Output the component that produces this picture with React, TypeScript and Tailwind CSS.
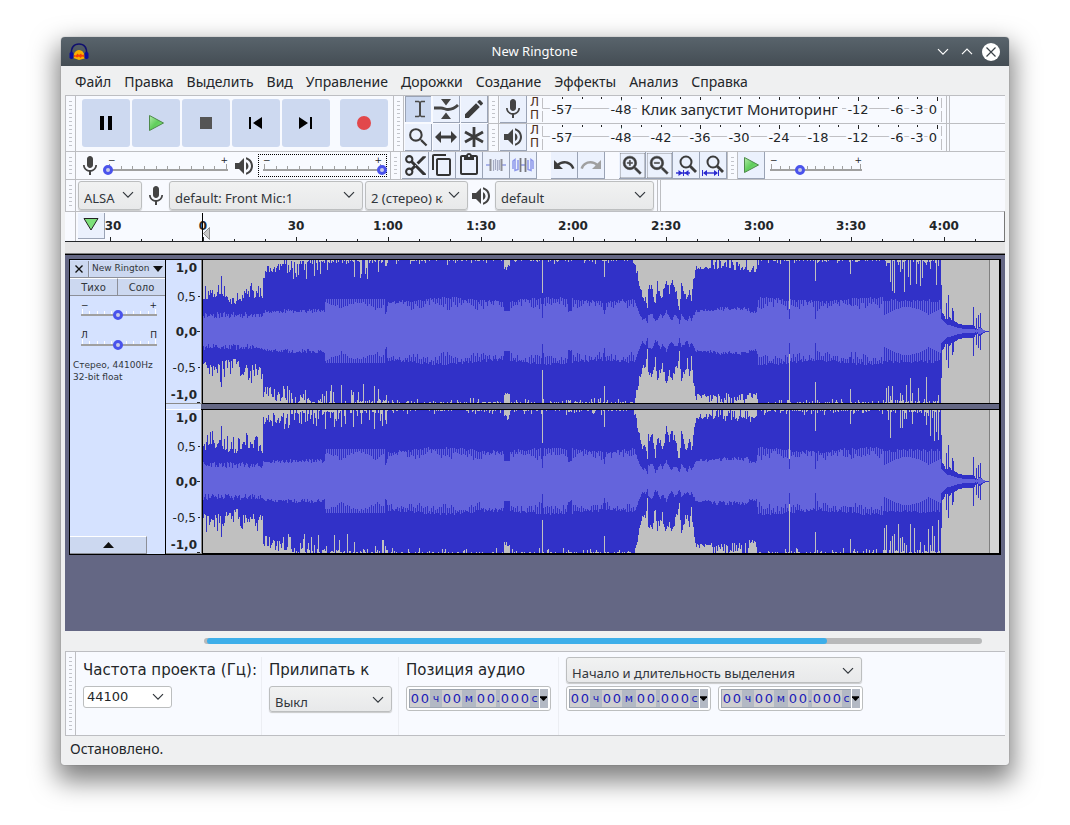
import { useMemo } from "react";
import type { ReactNode } from "react";
import {
  MdContentCopy,
  MdContentCut,
  MdContentPaste,
  MdEdit,
  MdMic,
  MdRedo,
  MdSearch,
  MdUndo,
  MdVolumeUp,
  MdZoomIn,
  MdZoomOut,
} from "react-icons/md";

const MENU = ["Файл", "Правка", "Выделить", "Вид", "Управление", "Дорожки", "Создание", "Эффекты", "Анализ", "Справка"];

const INK = "#31363b";

/* ---------- small building blocks ---------- */

function Grip() {
  return (
    <div className="flex w-[11px] shrink-0 self-stretch border-x border-[#bdbec2] px-[3px] py-[5px]">
      <div className="w-full bg-[repeating-linear-gradient(to_bottom,#c2c4ca_0_1px,transparent_1px_4px)]" />
    </div>
  );
}

function Chevron({ className = "" }: { className?: string }) {
  return (
    <svg className={className} width="12" height="8" viewBox="0 0 12 8" fill="none" stroke={INK} strokeWidth="1.2">
      <path d="M1 1.2 6 6.2 11 1.2" />
    </svg>
  );
}

function Combo({ label, value, className = "" }: { label: string; value: string; className?: string }) {
  return (
    <div className={`relative shrink-0 ${className}`}>
      <select
        aria-label={label}
        defaultValue={value}
        className="h-full w-full appearance-none overflow-hidden rounded-[3px] border border-[#bcbebf] bg-linear-to-b from-[#f1f2f2] to-[#e8e9ea] pt-[6px] pr-6 pl-[5px] text-[13px] text-[#31363b] shadow-[0_1px_1px_#c8c9ca]"
      >
        <option>{value}</option>
      </select>
      <Chevron className="pointer-events-none absolute top-[10px] right-2" />
    </div>
  );
}

function ToolButton({ label, active, children }: { label: string; active?: boolean; children: ReactNode }) {
  return (
    <button
      aria-label={label}
      className={`flex h-[27px] w-[27px] shrink-0 items-center justify-center border-r border-b ${
        active ? "border-[#f8faff] bg-[#cbd8f0] shadow-[inset_1px_1px_0_#9aa3b5]" : "border-[#9aa3b5] bg-[#ebf1fd]"
      }`}
    >
      {children}
    </button>
  );
}

function Slider({
  label,
  value,
  ends = ["−", "+"],
  light,
  className = "",
}: {
  label: string;
  value: number;
  ends?: string[];
  light?: boolean;
  className?: string;
}) {
  return (
    <div className={`flex flex-col ${className}`}>
      <div className="flex h-2 items-center justify-between px-[5px] font-['DejaVu_Sans',sans-serif] text-[9px] leading-none text-[#232629]">
        <span>{ends[0]}</span>
        <span>{ends[1]}</span>
      </div>
      <div className="relative h-[11px]">
        <div className="mx-[5px] flex h-[7px] items-end justify-between border-b-2 border-[#a0a0a0] px-px">
          {Array.from({ length: 11 }, (_, i) => (
            <i
              key={i}
              className={`w-px ${i % 10 === 0 ? "h-[5px]" : "h-[3px]"} ${light ? "bg-white" : "bg-[#a0a0a0]"}`}
            />
          ))}
        </div>
        <input
          type="range"
          aria-label={label}
          min={0}
          max={100}
          defaultValue={value}
          className="absolute inset-0 h-[11px] w-full appearance-none bg-transparent [&::-webkit-slider-thumb]:h-[10px] [&::-webkit-slider-thumb]:w-[10px] [&::-webkit-slider-thumb]:appearance-none [&::-webkit-slider-thumb]:rounded-full [&::-webkit-slider-thumb]:border-[3px] [&::-webkit-slider-thumb]:border-[#4a53ec] [&::-webkit-slider-thumb]:bg-[#c9cbe6]"
        />
      </div>
    </div>
  );
}

/* ---------- icons ---------- */

function AppIcon() {
  return (
    <svg width="20" height="18" viewBox="0 0 20 18">
      <path d="M2.500 11C1.800 4.500 5 1 10 1s8.200 3.500 7.500 10" fill="none" stroke="#10106e" strokeWidth="1.500" />
      <path d="M4.500 15C4 11 6.500 7 10 7s6 3.500 5.500 8.500L10 17Z" fill="#f9b000" />
      <path d="M5 12l2 .5 1.500-2 1.500 1.500 2-1.500 1 1.500 2-.5v2.500l-2-.5-1.500 1.500-1.500-1.500-2 1-1.500-1-1.500.5Z" fill="#f5400a" />
      <rect x="0.500" y="9" width="4" height="7" rx="1.800" fill="#0d0d9c" />
      <rect x="15.500" y="9" width="4" height="7" rx="1.800" fill="#0d0d9c" />
    </svg>
  );
}

function PlayIcon() {
  return (
    <svg width="17" height="18" viewBox="0 0 17 18">
      <defs>
        <linearGradient id="play" x1="0" y1="0" x2="1" y2="1">
          <stop offset="0" stopColor="#b4ecab" />
          <stop offset=".5" stopColor="#5fce5a" />
          <stop offset="1" stopColor="#8ce084" />
        </linearGradient>
      </defs>
      <path d="M1.500 1.500 15.500 9 1.500 16.500Z" fill="url(#play)" stroke="#4e8a4b" />
    </svg>
  );
}

function SelectIcon() {
  return (
    <svg className="ml-1" width="12" height="18" viewBox="0 0 12 18" fill="none" stroke="#4a4a4a" strokeWidth="2">
      <path d="M1 1.500h3.500L6 2.500l1.500-1H11M1 16.500h3.500L6 15.500l1.500 1H11" strokeWidth="1.500" />
      <path d="M6 2v14" />
    </svg>
  );
}

function EnvelopeIcon() {
  return (
    <svg width="26" height="20" viewBox="0 0 26 20" fill="#444">
      <path d="M8 0h10l-5 6.500ZM8 20h10l-5-6.500Z" />
      <path d="M1 9h7c3 0 4 1.500 7 1.500S22 9 25 6" fill="none" stroke="#444" strokeWidth="2.800" />
    </svg>
  );
}

function TimeShiftIcon() {
  return (
    <svg width="22" height="14" viewBox="0 0 22 14" fill="#3c3c3c">
      <path d="M0 7 6 1v4.500h10V1l6 6-6 6V8.500H6V13Z" />
    </svg>
  );
}

function MultiIcon() {
  return (
    <svg width="20" height="20" viewBox="0 0 20 20" fill="none" stroke="#3c3c3c" strokeWidth="2.800">
      <path d="M10 0v20M1 5l18 10M19 5 1 15" />
    </svg>
  );
}

function TrimIcon() {
  return (
    <svg width="20" height="18" viewBox="0 0 20 18" fill="none">
      <path d="M0 9h5M15 9h5" stroke="#a9b3ea" strokeWidth="2" />
      <path d="M4.500 3v12M15.500 3v12" stroke="#8e8f96" strokeWidth="2" />
      <path d="M7.500 15V4M9.500 14V3M11.500 15V4M13.300 14V4" stroke="#a7acc4" strokeWidth="1.200" />
    </svg>
  );
}

function SilenceIcon() {
  return (
    <svg width="22" height="18" viewBox="0 0 22 18" fill="none">
      <path d="M1 13V5l2-1.500v11l3-1V4M21 13V5l-2-1.500v11l-3-1V4" stroke="#8d97ea" strokeWidth="1.500" />
      <path d="M8.500 9h5" stroke="#8d97ea" strokeWidth="1.500" />
      <path d="M8.500 2v14M13.500 2v14" stroke="#77787e" strokeWidth="1.800" />
    </svg>
  );
}

// Material's magnifier with a heavier plus or minus over its lens
function ZoomIcon({ plus }: { plus?: boolean }) {
  const Icon = plus ? MdZoomIn : MdZoomOut;
  return (
    <span className="relative">
      <Icon size={25} color="#3c3c3c" stroke="#3c3c3c" strokeWidth="0.500" />
    </span>
  );
}

function ZoomFitIcon({ wide }: { wide?: boolean }) {
  return (
    <svg width="24" height="24" viewBox="0 0 24 24" fill="none">
      <circle cx="12" cy="9" r="5.500" stroke="#3c3c3c" strokeWidth="2" />
      <path d="m16 13 6 6" stroke="#3c3c3c" strokeWidth="2.800" />
      <path d={wide ? "M3 20h13" : "M2 20h14"} stroke="#2b2bd0" strokeWidth="1.400" />
      {wide ? (
        <path d="M1 17h1v6H1ZM17 17h1v6h-1ZM2 20l4-3v6ZM17 20l-4-3v6Z" fill="#2b2bd0" />
      ) : (
        <path d="M8.500 20 4.500 17v6ZM10.500 20l4-3v6ZM9 17h1v6H9Z" fill="#2b2bd0" />
      )}
    </svg>
  );
}

/* ---------- meters ---------- */

const METER_LABELS: [string, number][] = [
  ["-57", 20], ["-48", 79], ["-42", 119], ["-36", 158], ["-30", 197], ["-24", 237],
  ["-18", 276], ["-12", 316], ["-6", 355], ["-3", 375], ["0", 391],
];

function Meter({ label, icon, hint }: { label: string; icon: ReactNode; hint?: string }) {
  // the hint covers the middle of the scale
  const labels = hint ? METER_LABELS.filter(([, x]) => x < 100 || x > 300) : METER_LABELS;
  return (
    <div className="flex h-7 font-['DejaVu_Sans',sans-serif]">
      <Grip />
      <div className="ml-px flex">
        <ToolButton label={label}>{icon}</ToolButton>
      </div>
      <div className="flex w-[15px] flex-col items-center text-[12px] leading-[13px] text-[#4d2c1a]">
        <span>Л</span>
        <span>П</span>
      </div>
      <div className="relative w-[400px]">
        <svg width="400" height="27" className="block">
          <path d="M0.500 2V12.500H396M0.500 26V15M399.500 2v10M399.500 15v11" fill="none" stroke="#c0c0c4" />
          {Array.from({ length: 20 }, (_, i) => (
            <rect key={i} x={20 + Math.round(i * 19.74)} y="1" width="1" height={i % 4 === 3 ? 4 : 2} fill="#222" />
          ))}
          {labels.map(([text, x]) => (
            <text
              key={text}
              x={x}
              y="18"
              textAnchor="middle"
              className="fill-[#232629] stroke-[#f8faff] stroke-4 text-[13px] [paint-order:stroke]"
            >
              {text}
            </text>
          ))}
        </svg>
        {hint && (
          <span className="absolute top-[4px] left-[95px] w-[205px] bg-[#f8faff] text-center font-['Noto_Sans',sans-serif] text-[15px] leading-[19px] whitespace-nowrap text-[#232629]">
            {hint}
          </span>
        )}
      </div>
      <div className="ml-1 w-1 border-x border-[#bdbec2]" />
    </div>
  );
}

/* ---------- timeline and waveforms ---------- */

// pixels in thirty seconds at the current zoom
const HALF_MINUTE = 92.6;

function Timeline() {
  const origin = 97;
  return (
    <svg className="block h-[30px] w-full">
      {Array.from({ length: 30 }, (_, i) => {
        const n = i - 3;
        const x = Math.round(origin + 1 + (n * HALF_MINUTE) / 3);
        const major = n % 3 === 0;
        return <rect key={i} x={x} y={major ? 25 : 27} width="1" height={major ? 4 : 2} fill="#232629" />;
      })}
      {["30", "0", "30", "1:00", "1:30", "2:00", "2:30", "3:00", "3:30", "4:00"].map((t, i) => (
        <text
          key={i}
          x={i === 0 ? 8 : Math.round(origin + 1 + (i - 1) * HALF_MINUTE)}
          y="18"
          textAnchor="middle"
          className="fill-[#232629] font-['DejaVu_Sans',sans-serif] text-[12px] font-bold"
        >
          {t}
        </text>
      ))}
      <path d="M104.500 15.500v12l-6-6Z" fill="#c8c8c8" stroke="#8a8a8a" />
      <rect x={origin} y="1" width="1" height="29" fill="#000" />
    </svg>
  );
}

function rng(seed: number) {
  let s = seed;
  return () => {
    s = (s * 1664525 + 1013904223) % 4294967296;
    return s / 4294967296;
  };
}

const HALF = 71;

// [column, peak, rms] where the song goes quiet and where it fades out
const QUIET: number[][] = [
  [431, 70, 30], [434, 56, 22], [437, 43, 14], [439, 34, 10], [442, 34, 12], [444, 20, 7], [445, 43, 15],
  [449, 44, 16], [452, 27, 8], [454, 46, 10], [457, 38, 17], [459, 34, 12], [463, 51, 19], [466, 38, 12],
  [468, 50, 10], [471, 42, 14], [474, 33, 13], [476, 20, 7], [478, 47, 15], [480, 42, 13], [484, 30, 9],
  [486, 44, 14], [488, 28, 10], [490, 48, 14], [492, 60, 18],
];
const TAIL: number[][] = [
  [738, 46, 12], [739, 18, 11], [741, 15, 9], [742, 12, 8], [743, 28, 7], [744, 12, 6], [745, 36, 6], [746, 14, 6],
  [748, 11, 5], [749, 23, 5], [750, 20, 5], [751, 10, 4], [755, 7, 3], [762, 6, 2], [769, 6, 2], [770, 24, 2],
  [771, 5, 2], [772, 3, 1], [773, 13, 2], [774, 2, 1], [775, 16, 3], [776, 4, 3], [777, 18, 3], [778, 3, 2],
  [780, 1, 1], [782, 0, 0], [787, 0, 0],
];
// single columns cut short by a beat
const CUTS: Record<number, [number, number]> = {
  339: [38, 13], 401: [54, 17], 586: [22, 12], 612: [50, 12], 614: [68, 20], 647: [57, 26],
};

function lerp(points: number[][], x: number, k: number) {
  for (let i = 1; i < points.length; i++) {
    if (x <= points[i][0]) {
      const a = points[i - 1];
      const b = points[i];
      return a[k] + ((b[k] - a[k]) * (x - a[0])) / (b[0] - a[0]);
    }
  }
  return points[points.length - 1][k];
}

function column(x: number, rand: () => number): [number, number] {
  const r = rand();
  const r2 = rand();
  const trough = 26 + 2 * Math.sin(x / 5) + 7 * (r2 - 0.5);
  const loudRms = x % 2 ? 31 + 2 * Math.sin(x / 17) + 3 * (r2 - 0.5) : trough;
  const loudPeak = r < 0.12 ? 66 + 4 * r2 : 70 + 2 * r2;
  if (x < 60) return [x === 18 ? 55 : 29 + 3 * Math.sin(x / 6) + 18 * r * r2 + 6 * r, 13 + 6 * r2];
  if (x < 80) return [52 + 13 * r + (x - 60) / 3, 18 + 3 * r2];
  if (x < 122) return [r < 0.3 ? 52 + 14 * r2 : 66 + 6 * r2, 18 + 4 * r2];
  if (x < 182) return [r < 0.25 ? 52 + 16 * r2 : 68 + 5 * r2, x % 2 ? 32 : 20 + 7 * Math.abs(Math.sin(x / 11)) + 3 * r2];
  if (x < 184) return [56 + 12 * r, 16 + 3 * r2];
  if (x >= 301 && x < 307) return [60 + 6 * r, 20];
  if (x >= 365 && x < 369) return [68 + 3 * r, 19 + 2 * r2];
  if (x < 431) return [CUTS[x]?.[0] ?? loudPeak, CUTS[x]?.[1] ?? loudRms];
  if (x < 493) return [lerp(QUIET, x, 1) + 9 * (r - 0.5), lerp(QUIET, x, 2) + 2 * r2];
  if (x < 508) return [62 + 8 * r * r2, 19 + 3 * r2];
  if (x < 546) return [60 + 13 * r, 20 + 4 * r2];
  if (x < 554) return [58 + 8 * r, 18 + 2 * r2];
  if (CUTS[x]) return CUTS[x];
  if (x < 680) return [loudPeak, loudRms];
  if (x < 738) return [x % 2 && r < 0.6 ? 38 + 34 * r2 : 68 + 4 * r, x % 2 ? 16 + 8 * Math.abs(Math.cos(x / 14)) : 29 + 3 * r2];
  return [lerp(TAIL, x, 1), lerp(TAIL, x, 2)];
}

function bars(seed: number) {
  const up = rng(seed);
  const down = rng(seed + 77);
  let peak = "";
  let rms = "";
  for (let x = 0; x < 786; x++) {
    const [p1, r1] = column(x, up);
    const [p2, r2] = column(x, down);
    const top = Math.min(HALF, Math.round(p1));
    const bottom = Math.min(HALF, Math.round(p2));
    peak += `M${x} ${HALF - top}h1v${top + bottom + 1}h-1z`;
    const a = Math.round(r1);
    const b = Math.round(r2);
    rms += `M${x} ${HALF - a}h1v${a + b}h-1z`;
  }
  return { peak, rms };
}

function Waveform({ seed }: { seed: number }) {
  const { peak, rms } = useMemo(() => bars(seed), [seed]);
  return (
    <svg className="block h-[143px] w-full bg-[#d4d4d4]" shapeRendering="crispEdges">
      <rect width="786" height="143" fill="#c0c0c0" />
      <path d={peak} fill="#3131c8" />
      <path d={rms} fill="#6464dc" />
      <rect x="786" width="1" height="143" fill="#808080" />
    </svg>
  );
}

function AmplitudeScale() {
  const rows: [string, number, boolean][] = [
    ["1,0", 12, true], ["0,5", 41, false], ["0,0", 76, true], ["-0,5", 112, false], ["-1,0", 139, true],
  ];
  return (
    <svg className="block h-[143px] w-[35px] bg-[#d5e2ff] font-['DejaVu_Sans',sans-serif]">
      {rows.map(([t, y, bold]) => (
        <text
          key={t}
          x={bold ? 31 : 30}
          y={y}
          textAnchor="end"
          className={bold ? "fill-[#232629] text-[12px] font-bold" : "fill-[#232629] text-[12px]"}
        >
          {t}
        </text>
      ))}
      <path d="M32 36.500h2M31 71.500h3M32 107.500h2M31 142.500h3" stroke="#232629" />
    </svg>
  );
}

function Channel({ seed }: { seed: number }) {
  return (
    <div className="flex">
      <div className="border-r border-b border-[#8a8a8a]">
        <AmplitudeScale />
      </div>
      <div className="min-w-0 flex-1 border-b border-l border-black">
        <Waveform seed={seed} />
      </div>
    </div>
  );
}

function Track() {
  return (
    <section className="flex border border-r-2 border-black bg-[#646784]">
      <div className="flex w-24 shrink-0 flex-col border-r border-black bg-[#d5e2ff] font-['DejaVu_Sans',sans-serif] text-[10px] text-[#31363b]">
        <div className="flex h-[18px] gap-px border-b border-[#8c8f98] pt-px">
          <button aria-label="Закрыть дорожку" className="flex w-[19px] shrink-0 items-center justify-center border-r border-[#8c8f98] bg-[#ccd8f0]">
            <svg width="8" height="8" viewBox="0 0 8 8" stroke="#111" strokeWidth="1.400">
              <path d="M.5.500l7 7M7.500.500l-7 7" />
            </svg>
          </button>
          <button className="flex flex-1 items-center justify-between bg-[#ccd8f0] pr-[2px] pl-[2px] text-[9px] whitespace-nowrap">
            New Rington
            <svg className="shrink-0" width="10" height="6" viewBox="0 0 10 6">
              <path d="M0 0h10L5 6Z" fill="#111" />
            </svg>
          </button>
        </div>
        <div className="flex h-[18px] border-b border-[#8c8f98]">
          <button className="flex-1 border-t border-r border-t-white border-r-[#8c8f98] bg-[#ccd8f0]">Тихо</button>
          <button className="flex-1 border-t border-t-white bg-[#ccd8f0]">Соло</button>
        </div>
        <Slider label="Усиление" value={49} light className="mt-[5px] mr-[3px] ml-[6px]" />
        <Slider label="Панорама" value={49} ends={["Л", "П"]} light className="mt-[11px] mr-[3px] ml-[6px]" />
        <p className="mt-[9px] pl-[3px] text-[9px] leading-3 whitespace-nowrap">
          Стерео, 44100Hz
          <br />
          32-bit float
        </p>
        <button
          aria-label="Свернуть"
          className="mt-auto flex h-[18px] w-[77px] items-center justify-center border-t border-r border-b border-t-white border-r-[#8c8f98] border-b-[#8c8f98] bg-[#ccd8f0]"
        >
          <svg width="11" height="6" viewBox="0 0 11 6">
            <path d="M0 6h11L5.500 0Z" fill="#111" />
          </svg>
        </button>
      </div>
      <div className="flex min-w-0 flex-1 flex-col">
        <Channel seed={11} />
        <div className="flex h-[6px]">
          <div className="w-[35px] border-b border-white bg-[#d5e2ff]" />
          <div className="flex-1 border-b border-black" />
        </div>
        <Channel seed={52} />
      </div>
    </section>
  );
}

/* ---------- selection bar ---------- */

const TIME_PARTS: [number, string, string][] = [
  [2, "ч", "w-3"],
  [2, "м", "w-[14px]"],
  [2, ".", "w-1"],
  [3, "с", "w-[9px]"],
];

function TimeField({ label }: { label: string }) {
  return (
    <div
      role="group"
      aria-label={label}
      className="flex h-[25px] w-[145px] rounded-[3px] border border-[#bcbebf] bg-white p-[2px] font-['DejaVu_Sans',sans-serif] text-[13px] text-[#1c1cb8]"
    >
      <div className="flex h-[19px] w-[130px] border border-r-0 border-[#9ea6b0] bg-[#b3b9c4]">
        {TIME_PARTS.map(([count, unit, width], p) => (
          <div key={p} className="flex">
            {Array.from({ length: count }, (_, i) => (
              <input
                key={i}
                aria-label={`${label}: ${unit} ${i + 1}`}
                maxLength={1}
                defaultValue="0"
                className="h-[17px] w-[10px] bg-[#cfcfcf] text-center"
              />
            ))}
            <span className={`text-center text-[11px] leading-[17px] ${width}`}>{unit}</span>
          </div>
        ))}
      </div>
      <button aria-label="Формат времени" className="ml-px flex h-[19px] w-2 items-center bg-[#b3b9c4]">
        <svg width="7" height="5" viewBox="0 0 8 5">
          <path d="M0 0h8v1L4.500 5h-1L0 1Z" fill="#000" />
        </svg>
      </button>
    </div>
  );
}

const FIELD_LABEL = "block h-[29px] font-['DejaVu_Sans',sans-serif] text-[15px] leading-[27px] whitespace-nowrap";

const TRANSPORT_BUTTON = "flex h-12 w-12 items-center justify-center rounded-[3px] bg-[#cdd9f0]";

export default function App() {
  return (
    <div className="min-h-screen bg-white px-[61px] pt-[37px] pb-[60px] font-['Noto_Sans',sans-serif] text-[13px] text-[#232629]">
      <main className="flex flex-col rounded-t-[4px] rounded-b-[3px] bg-[#eff0f1] shadow-[0_12px_26px_4px_rgba(0,0,0,0.5),0_0_1px_#777]">
        <header className="grid h-[29px] grid-cols-3 items-center rounded-t-[4px] bg-linear-to-b from-[#59646c] to-[#444d54] pr-[9px] pl-2 text-[#fcfcfc]">
          <AppIcon />
          <h1 className="text-center">New Ringtone</h1>
          <div className="flex items-center justify-end gap-[9px]">
            <div className="flex gap-3">
              <button aria-label="Свернуть окно">
                <svg width="12" height="8" viewBox="0 0 12 8" fill="none" stroke="#fff" strokeWidth="1.200">
                  <path d="M1 1.200 6 6.200 11 1.200" />
                </svg>
              </button>
              <button aria-label="Развернуть окно">
                <svg width="12" height="8" viewBox="0 0 12 8" fill="none" stroke="#fff" strokeWidth="1.200">
                  <path d="M1 6.200 6 1.200 11 6.200" />
                </svg>
              </button>
            </div>
            <button aria-label="Закрыть окно" className="flex h-[18px] w-[18px] items-center justify-center rounded-full bg-white">
              <svg width="10" height="10" viewBox="0 0 10 10" stroke="#3a4248" strokeWidth="1.200">
                <path d="M.5.500l9 9M9.500.500l-9 9" />
              </svg>
            </button>
          </div>
        </header>

        <nav className="flex h-[29px] items-center gap-[13px] px-[14px] pt-px text-[14px]">
          {MENU.map((m) => (
            <button key={m}>{m}</button>
          ))}
        </nav>

        <div className="mx-1 bg-[#f8faff]">
          {/* transport, tools, meters */}
          <div className="flex h-14 border-t border-[#bdbec2]">
            <Grip />
            <div className="flex gap-[2px] py-[3px] pr-[5px] pl-[6px]">
              <button aria-label="Пауза" className={TRANSPORT_BUTTON}>
                <svg width="12" height="14" viewBox="0 0 12 14">
                  <path d="M0 0h4v14H0ZM8 0h4v14H8Z" />
                </svg>
              </button>
              <button aria-label="Воспроизвести" className={TRANSPORT_BUTTON}>
                <PlayIcon />
              </button>
              <button aria-label="Стоп" className={TRANSPORT_BUTTON}>
                <span className="h-3 w-3 bg-[#555]" />
              </button>
              <button aria-label="К началу" className={TRANSPORT_BUTTON}>
                <svg width="14" height="12" viewBox="0 0 14 12">
                  <path d="M0 0h2v12H0ZM13 0v12L4 6Z" />
                </svg>
              </button>
              <button aria-label="К концу" className={TRANSPORT_BUTTON}>
                <svg width="14" height="12" viewBox="0 0 14 12">
                  <path d="M11 0h2v12h-2ZM0 0v12l9-6Z" />
                </svg>
              </button>
              <button aria-label="Запись" className={`ml-2 ${TRANSPORT_BUTTON}`}>
                <span className="h-[14px] w-[14px] rounded-full bg-[#e2484b]" />
              </button>
            </div>
            <Grip />
            <div className="grid grid-cols-3 content-start gap-x-px gap-y-px pl-px">
              <ToolButton label="Выделение" active><SelectIcon /></ToolButton>
              <ToolButton label="Огибающая"><EnvelopeIcon /></ToolButton>
              <ToolButton label="Карандаш"><MdEdit size={24} color="#3c3c3c" /></ToolButton>
              <ToolButton label="Масштаб"><MdSearch size={25} color="#3c3c3c" /></ToolButton>
              <ToolButton label="Сдвиг"><TimeShiftIcon /></ToolButton>
              <ToolButton label="Мультиинструмент"><MultiIcon /></ToolButton>
            </div>
            <div className="min-w-0 flex-1">
              <div className="h-7 border-b border-[#bdbec2]">
                <Meter label="Уровень записи" icon={<MdMic size={24} color="#444" />} hint="Клик запустит Мониторинг" />
              </div>
              <Meter label="Уровень воспроизведения" icon={<MdVolumeUp size={24} color="#444" />} />
            </div>
          </div>

          {/* mixer, edit, zoom */}
          <div className="flex h-7 items-center border-t border-[#bdbec2]">
            <Grip />
            <MdMic className="ml-[2px] shrink-0" size={24} color="#444" />
            <Slider label="Громкость записи" value={0} className="ml-px w-[130px]" />
            <MdVolumeUp className="-ml-px shrink-0" size={24} color="#444" />
            <div className="ml-[2px] flex h-[23px] items-center border border-dotted border-black">
              <Slider label="Громкость воспроизведения" value={100} className="-mx-px w-[129px]" />
            </div>
            <div className="ml-[3px] flex self-stretch"><Grip /></div>
            <div className="ml-px flex self-start">
              <ToolButton label="Вырезать"><MdContentCut size={25} color="#333" /></ToolButton>
              <ToolButton label="Копировать"><MdContentCopy size={24} color="#333" /></ToolButton>
              <ToolButton label="Вставить"><MdContentPaste size={24} color="#333" /></ToolButton>
              <ToolButton label="Обрезать"><TrimIcon /></ToolButton>
              <ToolButton label="Тишина"><SilenceIcon /></ToolButton>
            </div>
            <div className="ml-[14px] flex self-start">
              <ToolButton label="Отменить"><MdUndo size={24} color="#3c3c3c" /></ToolButton>
              <ToolButton label="Повторить"><MdRedo size={24} color="#a0a0a0" /></ToolButton>
            </div>
            <div className="ml-[14px] flex self-start">
              <ToolButton label="Приблизить"><ZoomIcon plus /></ToolButton>
              <ToolButton label="Отдалить"><ZoomIcon /></ToolButton>
              <ToolButton label="Уместить выделение"><ZoomFitIcon /></ToolButton>
              <ToolButton label="Уместить проект"><ZoomFitIcon wide /></ToolButton>
            </div>
            <Grip />
            <div className="flex self-start">
              <ToolButton label="Воспроизвести на скорости"><PlayIcon /></ToolButton>
            </div>
            <Slider label="Скорость" value={33} className="w-[102px]" />
          </div>

          {/* devices */}
          <div className="flex h-8 border-t border-[#bdbec2]">
            <Grip />
            <div className="flex items-center py-px pl-[2px]">
              <Combo label="Интерфейс" value="ALSA" className="h-[29px] w-16" />
              <MdMic className="ml-[2px] shrink-0" size={24} color="#444" />
              <Combo label="Устройство записи" value="default: Front Mic:1" className="ml-px h-[29px] w-[194px]" />
              <Combo label="Каналы" value="2 (стерео) канала" className="ml-[2px] h-[29px] w-[103px]" />
              <MdVolumeUp className="ml-px shrink-0" size={24} color="#444" />
              <Combo label="Устройство воспроизведения" value="default" className="ml-[2px] h-[29px] w-[159px]" />
            </div>
            <div className="ml-[3px] w-1 border-x border-[#bdbec2]" />
          </div>

          {/* timeline */}
          <div className="flex h-[31px] border-t border-r border-b border-t-[#bdbec2] border-r-[#777] border-b-[#232629]">
            <div className="w-[11px] shrink-0 border-r border-[#bdbec2]" />
            <button
              aria-label="Закрепить указатель"
              className="mt-px ml-[2px] flex h-[26px] w-[27px] shrink-0 items-start justify-center border-r border-b border-[#9aa3b5] bg-[#ebf1fd] pt-[5px]"
            >
              <svg width="16" height="13" viewBox="0 0 16 13">
                <path d="M1 .5h14L8 12Z" fill="#7de07a" stroke="#222" />
              </svg>
            </button>
            <div className="min-w-0 flex-1">
              <Timeline />
            </div>
          </div>
        </div>

        <div className="mx-1 h-3 border-b border-[#808080] bg-[#e4e4e4]" />

        <div id="tracks" className="mx-1 min-h-[377px] border-t border-black bg-[#646784] pt-1 pr-1 pl-1">
          <Track />
        </div>

        <div className="mx-1 py-[7px] pr-[23px] pl-[139px]">
          <div role="scrollbar" aria-controls="tracks" aria-valuenow={0} className="h-[6px] rounded-full bg-[#b8b9ba] pl-[3px]">
            <div className="h-full w-4/5 rounded-full bg-[#3daee9]" />
          </div>
        </div>

        <div className="mx-1 flex h-[85px] border-y border-[#bdbec2] bg-[#f8faff]">
          <Grip />
          <div className="flex gap-[7px] pt-[5px] pl-[7px]">
            <div className="w-[179px] border-r border-[#eceef3]">
              <label htmlFor="rate" className={FIELD_LABEL}>Частота проекта (Гц):</label>
              <div className="flex h-[22px] w-[89px] items-center rounded-[3px] border border-[#bcbebf] bg-white">
                <input id="rate" defaultValue="44100" className="w-[68px] min-w-0 pl-[3px] font-['DejaVu_Sans',sans-serif]" />
                <button aria-label="Выбрать частоту"><Chevron /></button>
              </div>
            </div>
            <div className="w-[130px] border-r border-[#eceef3]">
              <div className={FIELD_LABEL}>Прилипать к</div>
              <Combo label="Прилипать к" value="Выкл" className="h-[26px] w-[123px]" />
            </div>
            <div className="w-[153px] border-r border-[#eceef3]">
              <div className={FIELD_LABEL}>Позиция аудио</div>
              <TimeField label="Позиция аудио" />
            </div>
            <div>
              <div className="h-[29px]">
                <Combo label="Режим выделения" value="Начало и длительность выделения" className="h-[26px] w-[296px]" />
              </div>
              <div className="flex gap-[7px]">
                <TimeField label="Начало выделения" />
                <TimeField label="Длительность выделения" />
              </div>
            </div>
          </div>
        </div>

        <footer className="h-[29px] px-[9px] text-[14px] leading-[26px]">Остановлено.</footer>
      </main>
    </div>
  );
}
